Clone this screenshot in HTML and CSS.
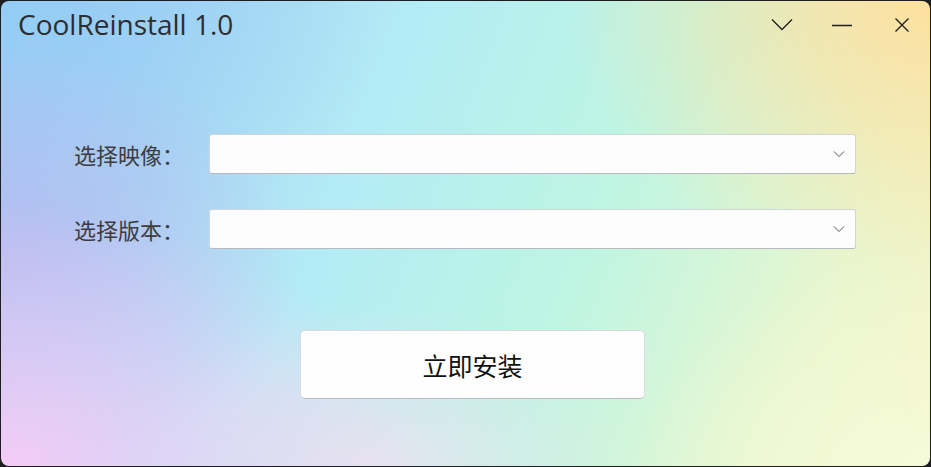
FILE: index.html
```html
<!DOCTYPE html>
<html lang="zh-CN">
<head>
    <meta charset="UTF-8">
    <title>CoolReinstall 1.0</title>
    <link rel="stylesheet" href="styles.css">
</head>
<body>
    <div class="window">
        <div class="titlebar">
            <div class="title">CoolReinstall 1.0</div>
            <div class="caption-buttons">
                <button class="caption-btn" title="更多">
                    <svg width="22" height="14" viewBox="0 0 22 14"><path d="M1 1.5 L11 11.5 L21 1.5" fill="none" stroke="#1f1f1f" stroke-width="1.3"/></svg>
                </button>
                <button class="caption-btn" title="最小化">
                    <svg width="22" height="14" viewBox="0 0 22 14"><path d="M1 7.5 H21" fill="none" stroke="#1f1f1f" stroke-width="1.4"/></svg>
                </button>
                <button class="caption-btn" title="关闭">
                    <svg width="16" height="16" viewBox="0 0 16 16"><path d="M1.5 1.5 L14.5 14.5 M14.5 1.5 L1.5 14.5" fill="none" stroke="#1f1f1f" stroke-width="1.4"/></svg>
                </button>
            </div>
        </div>
        <div class="form">
            <div class="row">
                <label class="label">选择映像：</label>
                <div class="combo">
                    <svg class="arrow" width="12" height="8" viewBox="0 0 12 8"><path d="M1 1.5 L6 6.5 L11 1.5" fill="none" stroke="#555" stroke-width="1"/></svg>
                </div>
            </div>
            <div class="row">
                <label class="label">选择版本：</label>
                <div class="combo">
                    <svg class="arrow" width="12" height="8" viewBox="0 0 12 8"><path d="M1 1.5 L6 6.5 L11 1.5" fill="none" stroke="#555" stroke-width="1"/></svg>
                </div>
            </div>
        </div>
        <div class="actions">
            <button class="install">立即安装</button>
        </div>
    </div>
</body>
</html>
```

FILE: styles.css
```css
html, body {
    margin: 0;
    height: 100%;
}
body {
    background-color: #1e1e22;
    font-family: "Open Sans", "Noto Sans CJK SC", sans-serif;
    overflow: hidden;
}
.window {
    box-sizing: border-box;
    width: 929px;
    height: 465px;
    margin: 1px 0 0 1px;
    border-radius: 8px;
    overflow: hidden;
    background:
        radial-gradient(ellipse 360px 280px at 100% 0%, #fde0a0 0%, rgba(253, 224, 160, 0) 100%),
        radial-gradient(ellipse 420px 260px at 0% 100%, #f4cbf6 0%, rgba(244, 203, 246, 0) 100%),
        radial-gradient(ellipse 300px 220px at 0% 55%, #b6bdf1 0%, rgba(182, 189, 241, 0) 100%),
        radial-gradient(ellipse 380px 280px at 0% 0%, #93cef5 0%, rgba(147, 206, 245, 0) 100%),
        radial-gradient(ellipse 300px 200px at 100% 100%, #f4fbd8 0%, rgba(244, 251, 216, 0) 100%),
        radial-gradient(ellipse 260px 160px at 40% 100%, #e6e4ef 0%, rgba(230, 228, 239, 0) 100%),
        linear-gradient(112deg, #a6c6f3 0%, #b3ecf5 38%, #bff5e2 62%, #e8f6cf 85%, #f7f3c8 100%);
    display: flex;
    flex-direction: column;
}
.titlebar {
    display: flex;
    justify-content: space-between;
    align-items: flex-start;
    height: 58px;
}
.title {
    padding: 4px 0 0 17px;
    font-family: "Open Sans", "Noto Sans", sans-serif;
    font-size: 28px;
    color: #2d2d30;
}
.caption-buttons {
    display: flex;
    gap: 30px;
    padding-top: 16px;
    padding-right: 13px;
}
.caption-btn {
    width: 30px;
    height: 16px;
    border: none;
    background: none;
    padding: 0;
    display: flex;
    align-items: center;
    justify-content: center;
}
.form {
    display: flex;
    flex-direction: column;
    gap: 35px;
    padding-top: 75px;
    padding-left: 73px;
}
.row {
    display: flex;
    align-items: center;
}
.label {
    width: 135px;
    font-family: "Noto Sans CJK SC", sans-serif;
    font-size: 22px;
    color: #3d3d40;
}
.combo {
    box-sizing: border-box;
    width: 647px;
    height: 40px;
    background: #fdfdfe;
    border: 1px solid #d2d4d8;
    border-bottom-color: #b8bac0;
    border-radius: 3px;
    display: flex;
    align-items: center;
    justify-content: flex-end;
    padding-right: 10px;
}
.actions {
    display: flex;
    padding-top: 81px;
    padding-left: 299px;
}
.install {
    box-sizing: border-box;
    width: 345px;
    height: 69px;
    background: #fefefe;
    border: 1px solid #d8dadc;
    border-bottom-color: #b9bbbe;
    border-radius: 5px;
    font-family: "Noto Sans CJK SC", sans-serif;
    font-size: 25px;
    color: #111;
}
```
